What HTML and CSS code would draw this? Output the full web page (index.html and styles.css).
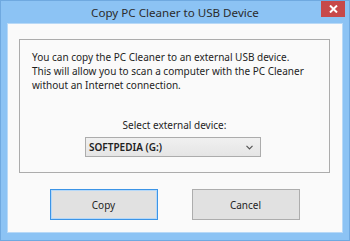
FILE: index.html
```html
<!DOCTYPE html>
<html>
<head>
<meta charset="utf-8">
<link rel="stylesheet" href="styles.css">
</head>
<body>
<div class="window">
  <div class="titlebar">
    <span class="title">Copy PC Cleaner to USB Device</span>
    <span class="close"><svg width="9" height="8" viewBox="0 0 9 8"><path d="M1 0.5 L8 7.5 M8 0.5 L1 7.5" stroke="#fff" stroke-width="2"/></svg></span>
  </div>
  <div class="client">
    <div class="group">
      <p class="msg">You can copy the PC Cleaner to an external USB device.<br>This will allow you to scan a computer with the PC Cleaner<br>without an Internet connection.</p>
      <div class="select-label">Select external device:</div>
      <div class="select">
        <span>SOFTPEDIA (G:)</span>
        <svg width="7" height="5" viewBox="0 0 7 5"><path d="M0.5 0.8 L3.5 3.8 L6.5 0.8" fill="none" stroke="#555" stroke-width="1.2"/></svg>
      </div>
    </div>
    <div class="buttons">
      <div class="btn default">Copy</div>
      <div class="btn">Cancel</div>
    </div>
  </div>
</div>
</body>
</html>
```

FILE: styles.css
```css
html, body {
  margin: 0;
  padding: 0;
}
body {
  width: 350px;
  height: 241px;
  overflow: hidden;
  font-family: "Noto Sans", "DejaVu Sans", sans-serif;
}
.window {
  box-sizing: border-box;
  width: 350px;
  height: 241px;
  background: #8cc3f4;
  border: 1px solid #6fa9e0;
  padding: 0 6px 7px 6px;
  display: flex;
  flex-direction: column;
}
.titlebar {
  height: 22px;
  position: relative;
  display: flex;
  align-items: center;
  justify-content: center;
}
.title {
  font-family: "Noto Sans", sans-serif;
  font-size: 11.6px;
  color: #2b2b2b;
  margin-top: 1px;
}
.close {
  position: absolute;
  right: -2px;
  top: 0;
  width: 24px;
  height: 16px;
  background: #c7494a;
  display: flex;
  align-items: center;
  justify-content: center;
}
.client {
  flex: 1;
  background: #fafafa;
  border: 1px solid #b8d9f7;
  display: flex;
  flex-direction: column;
  padding: 15px 12px 11px 11px;
}
.group {
  border: 1px solid #acacac;
  height: 134px;
  box-sizing: border-box;
  padding: 10px 0 0 12px;
  display: flex;
  flex-direction: column;
  font-size: 10px;
  color: #1e1e1e;
}
.msg {
  margin: 0;
  line-height: 14px;
}
.select-label {
  margin-top: 26px;
  text-align: center;
  line-height: 14px;
  padding-right: 12px;
}
.select {
  margin: 5px 0 0 53px;
  width: 176px;
  height: 20px;
  box-sizing: border-box;
  border: 1px solid #acacac;
  background: linear-gradient(#f0f0f0, #e5e5e5);
  display: flex;
  align-items: center;
  justify-content: space-between;
  padding: 0 7px 0 3px;
  font-weight: 600;
  color: #222;
}
.buttons {
  display: flex;
  justify-content: center;
  gap: 34px;
  margin-top: 16px;
}
.btn {
  width: 108px;
  height: 31px;
  box-sizing: border-box;
  border: 1px solid #adadad;
  background: #e1e1e1;
  display: flex;
  align-items: center;
  justify-content: center;
  font-size: 10px;
  color: #1e1e1e;
}
.btn.default {
  border: 1px solid #3c94e6;
  box-shadow: inset 0 0 0 1px #b5d8f8;
}
```
